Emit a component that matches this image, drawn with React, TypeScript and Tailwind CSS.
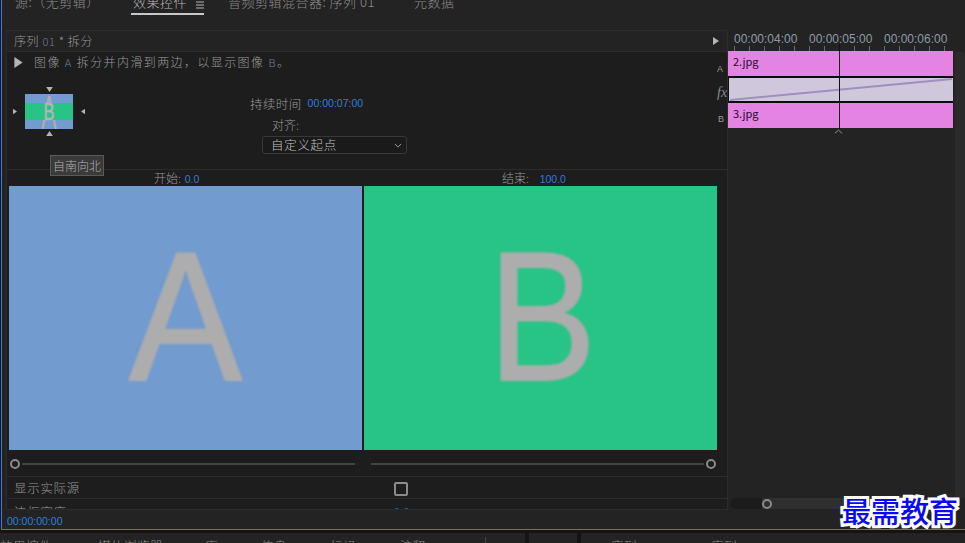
const cn = '"Noto Sans CJK SC", "Liberation Sans", sans-serif';
const latin = '"Liberation Sans", sans-serif';

function Tri({ dir, className }: { dir: 'up' | 'down' | 'left' | 'right'; className?: string }) {
  const d = {
    up: 'M0 6 L4 0 L8 6 Z',
    down: 'M0 0 L8 0 L4 6 Z',
    left: 'M6 0 L6 8 L0 4 Z',
    right: 'M0 0 L6 4 L0 8 Z',
  }[dir];
  return (
    <svg viewBox={dir === 'up' || dir === 'down' ? '0 0 8 6' : '0 0 6 8'} className={className} fill="#b4b4b4">
      <path d={d} />
    </svg>
  );
}

function Knob() {
  return <span className="block w-[10px] h-[10px] shrink-0 rounded-full border-2 border-[#8a8a8a]" />;
}

function Clip({ name }: { name: string }) {
  return (
    <div className="h-[25px] bg-[#e383e2] pl-[5px] text-[11px] leading-[20px] font-normal text-[#2a0a28]">{name}</div>
  );
}

function Ruler() {
  const labels = ['00:00:04:00', '00:00:05:00', '00:00:06:00'];
  return (
    <div className="h-[21px] overflow-hidden">
      <div className="flex pl-[6px] pt-[2px] text-[12px] leading-[14px] text-[#8f9aa6]" style={{ fontFamily: latin }}>
        {labels.map((l) => (
          <span key={l} className="w-[75px] shrink-0">{l}</span>
        ))}
      </div>
      <div className="flex pl-[6px]">
        {Array.from({ length: 15 }).map((_, i) => (
          <span key={i} className="w-[15px] h-[5px] shrink-0 border-l border-[#6a6a6a]" />
        ))}
      </div>
    </div>
  );
}

// small preview of the split: A halves at top and bottom, squeezed B in the middle
function Thumb() {
  return (
    <svg viewBox="0 0 48 35" className="w-[48px] h-[35px] my-[2px] block" fontFamily="Liberation Sans">
      <rect width="48" height="35" fill="#729bcf" />
      <g transform="translate(24 35) scale(0.48 1)">
        <text textAnchor="middle" fontSize="48" fill="#adadad">A</text>
      </g>
      <rect y="9" width="48" height="17" fill="#28c387" />
      <g transform="translate(24 26) scale(0.68 1)">
        <text textAnchor="middle" fontSize="24" fill="#b4b4b4" stroke="#b4b4b4" strokeWidth="0.7">B</text>
      </g>
    </svg>
  );
}

export default function App() {
  return (
    <div className="relative w-[965px] h-[543px] overflow-hidden bg-[#141414] flex flex-col text-[#9a9a9a] font-light" style={{ fontFamily: cn }}>
      <div className="h-[530px] shrink-0 ml-[1px] border-l border-b border-[#2f7fd8] bg-[#232323] flex flex-col">
        {/* tab bar, text is cut by the top of the window */}
        <div className="h-[30px] shrink-0 overflow-hidden">
          <div className="flex items-start -mt-[8px] text-[13px] leading-[20px] tracking-[0.5px] text-[#8e8e8e]">
            <span className="ml-[13px] w-[116px] shrink-0">源:（无剪辑）</span>
            <span className="w-[71px] h-[21px] box-content border-b-2 border-[#c8c8c8] pl-[2px] text-[#b8b8b8] flex justify-between shrink-0">
              效果控件
              <svg viewBox="0 0 8 8" className="w-[8px] h-[8px] mt-[9px]" stroke="#b8b8b8" strokeWidth="1"><path d="M0 1 H8 M0 4 H8 M0 7 H8" /></svg>
            </span>
            <span className="ml-[24px] w-[186px] shrink-0">音频剪辑混合器: 序列 01</span>
            <span>元数据</span>
          </div>
        </div>

        <div className="flex flex-1 min-h-0 pl-[4px]">
          {/* effect controls left side */}
          <div className="w-[722px] shrink-0 bg-[#1d1d1d] border border-[#2c2c2c] flex flex-col overflow-hidden">
            <div className="h-[21px] shrink-0 bg-[#232323] border-b border-[#2c2c2c] flex items-center justify-between pl-[7px] pr-[8px] text-[12px] tracking-[0.6px]">
              <span>序列 <span className="text-[#6f7f92] text-[11px]">01</span> * 拆分</span>
              <Tri dir="right" className="w-[6px] h-[8px]" />
            </div>

            <div className="h-[118px] shrink-0 border-b border-[#2c2c2c] relative">
              <div className="flex items-center h-[20px] pl-[7px] text-[12px] tracking-[1.4px]">
                <Tri dir="right" className="w-[9px] h-[11px] mr-[11px]" />
                <span>图像 <span className="text-[#6f7f92] text-[11px]">A</span> 拆分并内滑到两边，以显示图像 <span className="text-[#6f7f92] text-[11px]">B</span>。</span>
              </div>

              <div className="flex items-start">
                {/* transition thumbnail with direction arrows */}
                <div className="w-[243px] shrink-0 pl-[6px] pt-[15px] flex items-center">
                  <Tri dir="right" className="w-[4px] h-[7px] mr-[8px]" />
                  <div className="flex flex-col items-center">
                    <Tri dir="down" className="w-[7px] h-[5px]" />
                    <Thumb />
                    <Tri dir="up" className="w-[7px] h-[5px]" />
                  </div>
                  <Tri dir="left" className="w-[4px] h-[7px] ml-[8px]" />
                </div>
                <div className="pt-[21px]">
                  <div className="flex items-center h-[22px] text-[12.5px]">
                    <span className="tracking-[0.4px]">持续时间</span>
                    <span className="ml-[6px] text-[10.5px] text-[#2c7fdb]" style={{ fontFamily: latin }}>00:00:07:00</span>
                  </div>
                  <div className="h-[20px] pl-[22px] text-[12px] leading-[20px]">对齐:</div>
                  <div className="mt-[1px] ml-[12px] w-[145px] h-[18px] rounded-[3px] border border-[#383838] bg-[#1a1a1a] flex items-center justify-between pl-[8px] pr-[4px] text-[12.5px] tracking-[0.7px] text-[#c0c0c0]">
                    <span>自定义起点</span>
                    <svg viewBox="0 0 10 6" className="w-[8px] h-[5px]" fill="none" stroke="#a0a0a0" strokeWidth="1.2"><path d="M1 1 L5 5 L9 1" /></svg>
                  </div>
                </div>
              </div>

              {/* tooltip */}
              <div className="absolute left-[43px] top-[103px] z-10 w-[54px] h-[21px] bg-[#3a3a3a] border border-[#5a5a5a] text-center text-[12px] leading-[19px] text-[#b0b0b0]">自南向北</div>

              <span className="absolute left-[710px] top-[11px] text-[9px] leading-[12px]" style={{ fontFamily: latin }}>A</span>
              <span className="absolute left-[710px] top-[33px] text-[14px] leading-[16px] italic text-[#8a8a8a]" style={{ fontFamily: '"Liberation Serif", serif' }}>fx</span>
              <span className="absolute left-[711px] top-[61px] text-[9px] leading-[12px]" style={{ fontFamily: latin }}>B</span>
            </div>

            <div className="h-[16px] shrink-0 flex text-[12px] leading-[16px]">
              <div className="w-[357px] shrink-0 pl-[147px]">开始: <span className="ml-[1px] text-[10.5px] text-[#2c7fdb]" style={{ fontFamily: latin }}>0.0</span></div>
              <div className="pl-[138px]">结束: <span className="ml-[8px] text-[10.5px] text-[#2c7fdb]" style={{ fontFamily: latin }}>100.0</span></div>
            </div>

            <div className="h-[264px] shrink-0 flex pl-[2px] gap-[2px]" style={{ fontFamily: latin }}>
              <div className="w-[353px] bg-[#729bcf] overflow-hidden flex items-center justify-center pb-[4px] text-[184px] leading-none font-normal text-[#adadad]">
                <span className="block scale-x-[0.92] blur-[1px] [-webkit-text-stroke:2px_#adadad]">A</span>
              </div>
              <div className="w-[353px] bg-[#28c387] overflow-hidden flex items-center justify-center pb-[4px] pl-[4px] text-[184px] leading-none font-normal text-[#adadad]">
                <span className="block scale-x-[0.88] blur-[1px] [-webkit-text-stroke:2px_#adadad]">B</span>
              </div>
            </div>

            <div className="h-[27px] shrink-0 border-b border-[#2c2c2c] flex items-center pl-[3px] pt-[2px]">
              <Knob />
              <span className="w-[333px] h-[2px] ml-[2px] bg-[#444]" />
              <span className="w-[333px] h-[2px] ml-[16px] bg-[#444]" />
              <span className="ml-[2px]"><Knob /></span>
            </div>

            <div className="h-[22px] shrink-0 border-b border-[#2c2c2c] flex items-center pl-[7px] pt-[2px] text-[12.5px] tracking-[0.7px]">
              <span className="w-[380px]">显示实际源</span>
              <span className="w-[14px] h-[14px] rounded-[2px] border-2 border-[#8a8a8a]" />
            </div>

            <div className="flex-1 min-h-0 overflow-hidden flex pl-[7px] text-[12.5px] leading-[16px] tracking-[0.7px]">
              <span className="w-[380px] pt-[5px]">边框宽度</span>
              <span className="pt-[5px] text-[10.5px] text-[#2c7fdb]">0.0</span>
            </div>
          </div>

          {/* mini timeline */}
          <div className="flex-1 min-w-0 flex flex-col">
            <div className="flex flex-1 min-h-0">
              <div className="w-[225px] shrink-0 flex flex-col relative">
                <Ruler />
                <div className="flex flex-col gap-[2px] bg-[#0c0c0c]">
                  <Clip name="2.jpg" />
                  <div className="h-[23px] ml-[1px] bg-[#cfc8dc]">
                    <svg viewBox="0 0 224 23" className="block w-full h-full" preserveAspectRatio="none">
                      <path d="M1 22 L223 1" stroke="#a08fbc" strokeWidth="2" fill="none" />
                    </svg>
                  </div>
                  <Clip name="3.jpg" />
                </div>
                <span className="absolute left-[111px] top-[14px] h-[85px] w-px bg-[#161016]" />
                <svg viewBox="0 0 10 5" className="mt-[1px] ml-[106px] w-[9px] h-[5px]" fill="none" stroke="#9a9a9a" strokeWidth="1"><path d="M1 4.5 L5 1 L9 4.5" /></svg>
              </div>
              <div className="flex-1 ml-[2px] mt-[22px] bg-[#2a2a2a] rounded-t-[4px]" />
            </div>
            <div className="h-[11px] shrink-0 ml-[2px] mr-[12px] mb-[1px] rounded-full bg-[#2f2f2f] flex items-center">
              <div className="w-[32px] h-full rounded-l-full bg-[#1b1b1b]" />
              <Knob />
            </div>
          </div>
        </div>

        <div className="h-[19px] shrink-0 bg-[#232323] pl-[5px] pt-[2px] text-[10.5px] leading-[19px] text-[#2c7fdb] overflow-hidden" style={{ fontFamily: latin }}>00:00:00:00</div>
      </div>

      {/* lower panel tabs, cut by the bottom of the window */}
      <div className="flex-1 min-h-0 mt-[3px] flex gap-[4px] overflow-hidden text-[12.5px] leading-[18px] tracking-[0.5px] text-[#8e8e8e]">
        <div className="w-[525px] shrink-0 bg-[#232323] flex pt-[4px]">
          <span className="w-[98px]">效果控件</span>
          <span className="w-[107px]">媒体浏览器</span>
          <span className="w-[56px]">库</span>
          <span className="w-[69px]">信息</span>
          <span className="w-[70px]">标记</span>
          <span className="w-[85px]">注释</span>
          <span className="w-px h-[10px] bg-[#444]" />
        </div>
        <div className="w-[48px] shrink-0 bg-[#232323]" />
        <div className="flex-1 bg-[#232323] flex pl-[30px] pt-[4px]">
          <span className="w-[100px]">序列</span>
          <span>序列</span>
        </div>
      </div>

      {/* watermark over the screenshot */}
      <div
        className="absolute left-[842px] top-[493px] text-[29px] leading-[34px] font-medium text-[#0a0af0] [-webkit-text-stroke:6px_white] [paint-order:stroke_fill]"
        style={{ fontFamily: '"Noto Sans CJK SC", sans-serif' }}
      >
        最需教育
      </div>
    </div>
  );
}
